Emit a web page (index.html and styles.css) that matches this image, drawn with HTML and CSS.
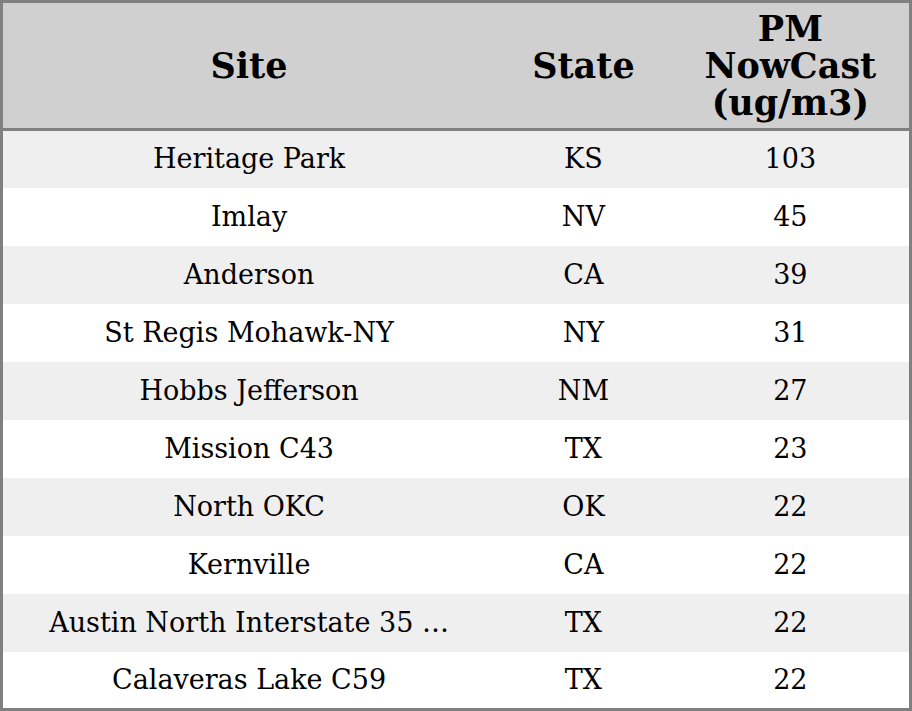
FILE: index.html
```html
<!DOCTYPE html>
<html>
<head>
<meta charset="utf-8">
<link rel="stylesheet" href="styles.css">
</head>
<body>
<table class="grid">
  <colgroup>
    <col class="c-site">
    <col class="c-state">
    <col class="c-pm">
  </colgroup>
  <thead>
    <tr class="head">
      <th>Site</th>
      <th>State</th>
      <th>PM<br>NowCast<br>(ug/m3)</th>
    </tr>
  </thead>
  <tbody>
    <tr class="odd"><td>Heritage Park</td><td>KS</td><td>103</td></tr>
    <tr><td>Imlay</td><td>NV</td><td>45</td></tr>
    <tr class="odd"><td>Anderson</td><td>CA</td><td>39</td></tr>
    <tr><td>St Regis Mohawk-NY</td><td>NY</td><td>31</td></tr>
    <tr class="odd"><td>Hobbs Jefferson</td><td>NM</td><td>27</td></tr>
    <tr><td>Mission C43</td><td>TX</td><td>23</td></tr>
    <tr class="odd"><td>North OKC</td><td>OK</td><td>22</td></tr>
    <tr><td>Kernville</td><td>CA</td><td>22</td></tr>
    <tr class="odd"><td>Austin North Interstate 35 …</td><td>TX</td><td>22</td></tr>
    <tr><td>Calaveras Lake C59</td><td>TX</td><td>22</td></tr>
  </tbody>
</table>
</body>
</html>
```
FILE: styles.css
```css
html, body {
  margin: 0;
  padding: 0;
  background: #ffffff;
}
.grid {
  width: 912px;
  height: 711px;
  border-collapse: collapse;
  border: 3px solid #808080;
  table-layout: fixed;
  font-family: "DejaVu Serif", serif;
  color: #000;
}
.c-site { width: 492px; }
.c-state { width: 176px; }
.c-pm { width: 238px; }
.head {
  background: #d0d0d0;
  height: 128px;
}
.head th {
  font-size: 35px;
  font-weight: bold;
  line-height: 37px;
  text-align: center;
  vertical-align: middle;
  border-bottom: 3px solid #808080;
  padding: 0;
}
tbody td {
  font-size: 27px;
  line-height: 30px;
  text-align: center;
  vertical-align: middle;
  padding: 0;
  white-space: nowrap;
}
tbody tr {
  height: 58px;
}
tbody tr.odd {
  background: #efefef;
}
```
